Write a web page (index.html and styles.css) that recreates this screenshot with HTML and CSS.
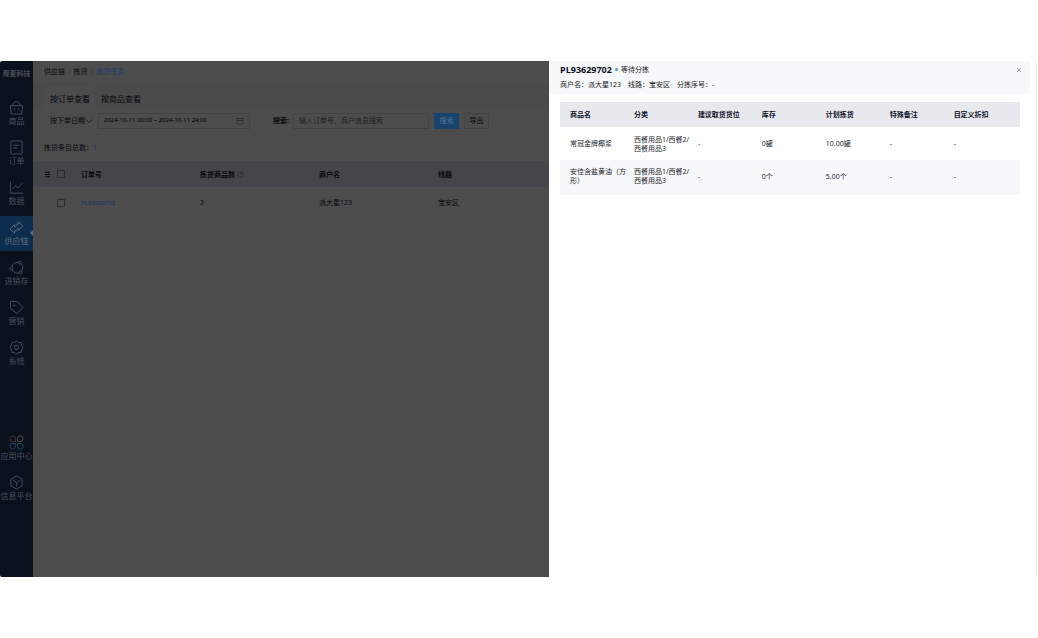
FILE: index.html
```html
<!DOCTYPE html>
<html lang="zh-CN">
<head>
<meta charset="utf-8">
<title>拣货任务</title>
<link rel="stylesheet" href="styles.css">
</head>
<body>
<div class="app">
  <nav class="sidebar" aria-label="主导航">
    <div class="brand">观麦科技</div>
    <a class="nav-item" href="#"><svg class="icon" viewBox="0 0 16 16"><path d="M1.500 6h13l-1 9h-11zM4 6C5 .2 11 .2 12 6M5.500 8.500v1.500M10.500 8.500v1.500"/></svg>商品</a>
    <a class="nav-item" href="#"><svg class="icon" viewBox="0 0 16 16"><rect x="2" y="1" width="12" height="14" rx="1"/><path d="M5 5.500h6M5 8.500h4"/></svg>订单</a>
    <a class="nav-item" href="#"><svg class="icon" viewBox="0 0 16 16"><path d="M1.500 1.500v12.500H15M4 9.500l3-3.500 3 2.500 4-5"/></svg>数据</a>
    <a class="nav-item active" href="#"><svg class="icon" viewBox="0 0 16 16"><path d="M7.500 6V4.500H10V2l5 4.500-5 4.500V9H8.500M8.500 10v1.500H6V14L1 9.500 6 5v2.500h1.500"/></svg>供应链</a>
    <a class="nav-item" href="#"><svg class="icon" viewBox="0 0 16 16"><circle cx="2.500" cy="9" r="1.600"/><circle cx="11.500" cy="2.800" r="1.600"/><circle cx="12.500" cy="13" r="1.600"/><path d="M3 7.400C3.500 4 6 2.500 9.900 2.600M13 3.800c2 2.300 2.200 5.300.3 7.800M10.900 13.800c-3 .9-6-.4-7.400-3.300"/></svg>进销存</a>
    <a class="nav-item" href="#"><svg class="icon" viewBox="0 0 16 16"><path d="M1.500 1.500H9L15 8l-6.500 6.500-7-5.500z"/><circle cx="5.500" cy="5.800" r=".7"/></svg>营销</a>
    <a class="nav-item" href="#"><svg class="icon" viewBox="0 0 16 16"><path d="M8 1l2.200 1.500 2.700.2.500 2.700L15 8l-1.600 2.600-.5 2.700-2.700.2L8 15l-2.200-1.500-2.700-.2-.5-2.700L1 8l1.600-2.600.5-2.700 2.700-.2z"/><circle cx="8" cy="8" r="2.300"/></svg>系统</a>
    <div class="nav-bottom">
      <a class="nav-item" href="#"><svg class="icon" viewBox="0 0 16 16"><path class="red" d="M7 7H4a3 3 0 1 1 3-3z"/><path class="gold" d="M9 7V4a3 3 0 1 1 3 3z"/><path class="blue" d="M7 9v3a3 3 0 1 1-3-3z"/><path class="teal" d="M9 9h3a3 3 0 1 1-3 3z"/></svg>应用中心</a>
      <a class="nav-item" href="#"><svg class="icon" viewBox="0 0 16 16"><path d="M8 1l6 3.500v7L8 15l-6-3.500v-7zM8 12V8M4.500 5.500L8 8l3.500-2.500"/></svg>信息平台</a>
    </div>
  </nav>

  <main class="main">
    <div class="crumbs">
      <a href="#">供应链</a><span class="sep">/</span><a href="#">拣货</a><span class="sep">/</span><a class="current" href="#">拣货任务</a>
    </div>
    <div class="tabs">
      <button class="tab selected" type="button">按订单查看</button>
      <button class="tab" type="button">按商品查看</button>
    </div>
    <form class="filters">
      <div class="select-wrap">
        <select class="select" aria-label="日期类型"><option>按下单日期</option></select>
        <svg class="chevron" viewBox="0 0 8 8"><path d="M1 2.500l3 3 3-3"/></svg>
      </div>
      <div class="field date">
        <input aria-label="日期范围" value="2024-10-11 00:00 ~ 2024-10-11 24:00">
        <svg class="calendar" viewBox="0 0 8 8"><path d="M1 1.500h6v5.500H1zM1 3.500h6M2.500.5v1.500M5.500.5v1.500"/></svg>
      </div>
      <label class="search-label" for="search">搜索:</label>
      <div class="field search"><input id="search" placeholder="输入订单号、商户信息搜索"></div>
      <button class="btn primary" type="button">搜索</button>
      <button class="btn" type="button">导出</button>
    </form>
    <div class="total">拣货条目总数：<span>1</span></div>
    <table class="orders">
      <colgroup><col class="c-tool"><col class="c-check"><col class="c-data"><col class="c-data"><col class="c-data"><col></colgroup>
      <thead><tr>
        <th><svg class="tool" viewBox="0 0 8 8"><path d="M1 1.500h6M1 4h6M1 6.500h6M5 .5v2M3 3v2M5 5.500v2"/></svg></th>
        <th><input type="checkbox" aria-label="全选"></th>
        <th>订单号</th>
        <th>拣货商品数<svg class="help" viewBox="0 0 8 8"><circle cx="4" cy="4" r="3.300"/><path d="M3 3q1-1.500 2 0L4 4.500M4 5.500v.6"/></svg></th>
        <th>商户名</th><th>线路</th>
      </tr></thead>
      <tbody><tr>
        <td></td><td><input type="checkbox" aria-label="选择 PL93629702"></td>
        <td><a class="order-link" href="#">PL93629702</a></td><td>2</td><td>派大星123</td><td>宝安区</td>
      </tr></tbody>
    </table>
  </main>

  <aside class="drawer" aria-label="订单详情">
    <header class="drawer-head">
      <div class="title-row">
        <h1>PL93629702</h1><i class="dot"></i><span class="status">等待分拣</span>
        <button class="close" type="button" aria-label="关闭"><svg viewBox="0 0 8 8"><path d="M2 2l4 4M6 2L2 6"/></svg></button>
      </div>
      <div class="meta"><span>商户名：派大星123</span><span>线路：宝安区</span><span>分拣序号：-</span></div>
    </header>
    <div class="drawer-body">
      <table class="items">
        <colgroup><col class="c7"><col class="c7"><col class="c7"><col class="c7"><col class="c7"><col class="c7"><col></colgroup>
        <thead><tr><th>商品名</th><th>分类</th><th>建议取货货位</th><th>库存</th><th>计划拣货</th><th>特殊备注</th><th>自定义折扣</th></tr></thead>
        <tbody>
          <tr><td>常冠金牌椰浆</td><td>西餐用品1/西餐2/<br>西餐用品3</td><td>-</td><td>0罐</td><td>10.00罐</td><td>-</td><td>-</td></tr>
          <tr><td>安佳含盐黄油（方<br>形）</td><td>西餐用品1/西餐2/<br>西餐用品3</td><td>-</td><td>0个</td><td>5.00个</td><td>-</td><td>-</td></tr>
        </tbody>
      </table>
    </div>
  </aside>
</div>
</body>
</html>
```

FILE: styles.css
```css
* { box-sizing: border-box; }

body {
  margin: 0;
  padding: 61px 0;
  min-height: 100vh;
  display: flex;
  background: #fff;
  font: 7px/9px "Noto Sans", "Noto Sans CJK SC", sans-serif;
  color: #17191d;
}

input, button, select { font: inherit; color: inherit; }
a { color: inherit; text-decoration: none; }
svg { fill: none; stroke: currentColor; }

.app {
  flex: 1;
  display: grid;
  grid-template-columns: 33px minmax(0, 516fr) minmax(0, 489fr);
}

/* Sidebar */
.sidebar {
  display: flex;
  flex-direction: column;
  gap: 5px;
  padding-bottom: 71px;
  background: #0a111d;
  color: #4b5058;
  border-radius: 2px 0 0 2px;
}
.brand {
  height: 30px;
  padding-top: 8px;
  text-align: center;
  white-space: nowrap;
  font-weight: 700;
}
.nav-item {
  position: relative;
  height: 35px;
  display: flex;
  flex-direction: column;
  align-items: center;
  padding-top: 4px;
  font-size: 8px;
  line-height: 12px;
  white-space: nowrap;
}
.nav-item.active { background: #0c2d4d; color: #5c6c7d; }
.nav-item.active::after {
  content: "";
  position: absolute;
  right: 0;
  top: 14px;
  border: 3px solid transparent;
  border-left: 0;
  border-right-color: #63696f;
}
.icon { width: 15px; height: 15px; flex: none; }
.icon .red { stroke: #563337; }
.icon .gold { stroke: #585148; }
.icon .blue { stroke: #284464; }
.icon .teal { stroke: #20505a; }
.nav-bottom {
  margin-top: auto;
  display: flex;
  flex-direction: column;
  gap: 5px;
}

/* Order list */
.main { background: #4c4c4c; color: #08090c; overflow: hidden; }
.crumbs {
  display: flex;
  height: 24px;
  padding: 6px 11px;
  gap: 3px;
  border-bottom: 1px solid #484848;
}
.crumbs .sep { color: #383838; }
.crumbs .current { color: #16396b; }
.tabs {
  display: flex;
  height: 23px;
  padding: 0 11px;
  background: #4a4a4a;
}
.tab {
  border: 0;
  padding: 3px 5px 0 6px;
  background: none;
  font-size: 8px;
  white-space: nowrap;
}
.tab.selected { background: #4c4c4c; }
.filters {
  display: flex;
  align-items: center;
  height: 27px;
  padding: 0 11px 1px;
  border-bottom: 1px solid #494949;
}
.filters > * { flex: none; }
.select-wrap { display: flex; align-items: center; width: 54px; padding-left: 6px; }
.select {
  appearance: none;
  border: 0;
  padding: 0;
  width: 35px;
  background: none;
}
.chevron { width: 8px; height: 8px; color: #202124; }
.field {
  display: flex;
  align-items: center;
  height: 16px;
  padding: 0 5px;
  border: 1px solid #434343;
}
.field input {
  flex: 1;
  min-width: 0;
  border: 0;
  padding: 0;
  background: none;
  outline: 0;
}
.field input::placeholder { color: #222325; opacity: 1; }
.date { width: 152px; font-size: 6px; color: #000; }
.calendar { width: 8px; height: 8px; color: #303030; }
.search-label { width: 43px; padding-left: 23px; font-weight: 700; white-space: nowrap; }
.search { width: 136px; }
.btn {
  height: 16px;
  width: 25px;
  margin-left: 5px;
  padding: 0;
  border: 1px solid #434343;
  background: none;
}
.btn.primary { border-color: #17436c; background: #17436c; color: #597590; }
.total { height: 26px; padding: 8px 11px; }
.total span { color: #16396b; }

.orders { width: 100%; table-layout: fixed; border-collapse: collapse; text-align: left; }
.orders .c-tool { width: 24px; }
.orders .c-check { width: 24px; }
.orders .c-data { width: 119px; }
.orders th, .orders td { padding: 0; white-space: nowrap; }
.orders th { height: 26px; background: #444649; }
.orders td { height: 31px; }
.orders th:first-child { padding-left: 11px; }
.order-link { color: #0d3268; font-size: 6px; }
.orders input {
  appearance: none;
  display: block;
  width: 8px;
  height: 8px;
  margin: 0;
  border: 1px solid #2c2d30;
}
.tool { display: block; width: 7px; height: 7px; }
.help { width: 7px; height: 7px; margin-left: 2px; vertical-align: -1px; color: #292d36; }

/* Detail drawer */
.drawer {
  padding-right: 1px;
  background: #fff;
  box-shadow: inset -1px 0 #fff, inset -2px 0 #ececec;
}
.drawer-head {
  margin-right: 7px;
  padding: 3px 11px;
  height: 33px;
  background: #f7f8fa;
}
.title-row { display: flex; align-items: center; height: 11px; }
h1 { margin: 0; font: 700 9px/11px "Open Sans", "Noto Sans", sans-serif; color: #0b1020; }
.dot { width: 3px; height: 3px; margin: 0 3px; border-radius: 50%; background: #4a98e0; }
.close {
  width: 8px;
  height: 8px;
  margin: 0 -4px 0 auto;
  padding: 0;
  border: 0;
  background: none;
  color: #aaa;
}
.close svg { display: block; width: 8px; height: 8px; }
.meta { display: flex; gap: 7px; padding-top: 5px; }
.drawer-body { padding: 8px 17px 0 11px; }

.items { width: 100%; table-layout: fixed; border-collapse: collapse; text-align: left; }
.items .c7 { width: 13.9%; }
.items th, .items td { padding: 0 0 0 10px; white-space: nowrap; }
.items th { height: 25px; background: #e8e9ee; color: #10142a; }
.items td { height: 33px; color: #25272c; }
.items tbody tr:nth-child(even) { background: #f7f8fa; border-bottom: 1px solid #f0f1f3; }
```
